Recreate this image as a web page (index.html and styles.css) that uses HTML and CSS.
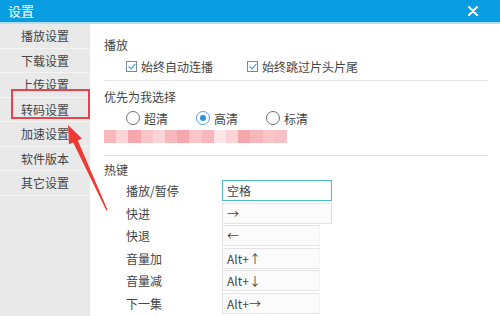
FILE: index.html
```html
<!DOCTYPE html>
<html lang="zh-CN">
<head>
    <meta charset="UTF-8">
    <title>设置</title>
    <link rel="stylesheet" href="styles.css">
</head>
<body>
    <div class="window">
        <div class="titlebar">
            <span class="title">设置</span>
            <svg class="close" width="10" height="10" viewBox="0 0 10 10">
                <path d="M1 1L9 9M9 1L1 9" stroke="#fff" stroke-width="2" stroke-linecap="round"/>
            </svg>
        </div>

        <div class="main">
            <ul class="sidebar">
                <li>播放设置</li>
                <li>下载设置</li>
                <li>上传设置</li>
                <li class="active">转码设置</li>
                <li>加速设置</li>
                <li>软件版本</li>
                <li>其它设置</li>
            </ul>

            <div class="content">
                <div class="section play">
                    <div class="section-title">播放</div>
                    <div class="options">
                        <label class="opt"><span class="checkbox checked"></span>始终自动连播</label>
                        <label class="opt"><span class="checkbox checked"></span>始终跳过片头片尾</label>
                    </div>
                </div>

                <div class="section quality">
                    <div class="section-title">优先为我选择</div>
                    <div class="options">
                        <label class="opt q1"><span class="radio"></span>超清</label>
                        <label class="opt q2"><span class="radio checked"></span>高清</label>
                        <label class="opt"><span class="radio"></span>标清</label>
                    </div>
                    <div class="blur">
                        <span class="b1"></span><span class="b2"></span><span class="b3"></span><span class="b4"></span>
                        <span class="b2"></span><span class="b1"></span><span class="b3"></span><span class="b4"></span>
                        <span class="b1"></span><span class="b5"></span><span class="b2"></span><span class="b3"></span>
                        <span class="b1"></span><span class="b4"></span><span class="b6"></span>
                    </div>
                </div>

                <div class="section hotkeys">
                    <div class="section-title">热键</div>
                    <div class="keys">
                        <div class="key-row"><span class="key-name">播放/暂停</span><span class="key-input focus">空格</span></div>
                        <div class="key-row"><span class="key-name">快进</span><span class="key-input wide">→</span></div>
                        <div class="key-row"><span class="key-name">快退</span><span class="key-input">←</span></div>
                        <div class="key-row"><span class="key-name">音量加</span><span class="key-input">Alt+↑</span></div>
                        <div class="key-row"><span class="key-name">音量减</span><span class="key-input">Alt+↓</span></div>
                        <div class="key-row"><span class="key-name">下一集</span><span class="key-input">Alt+→</span></div>
                    </div>
                </div>
            </div>
        </div>

        <!-- пометки поверх скриншота -->
        <div class="mark-box"></div>
        <svg class="mark-arrow" width="500" height="316" viewBox="0 0 500 316">
            <polygon points="68,125 82,138.5 77.8,140.4 107.6,210 106.4,210.4 73.2,142.4 69,144.3" fill="#ee3a32"/>
        </svg>
    </div>
</body>
</html>
```

FILE: styles.css
```css
* {
    box-sizing: border-box;
}

body {
    margin: 0;
    font-family: "Noto Sans CJK SC", "Noto Sans", sans-serif;
    font-size: 12px;
    color: #444;
    background: #fff;
}

.window {
    position: relative;
    width: 500px;
    height: 316px;
    overflow: hidden;
}

.titlebar {
    height: 24px;
    background: #079de0;
    border-bottom: 2px solid #aee0f6;
    display: flex;
    align-items: center;
    justify-content: space-between;
    padding: 0 22px 0 8px;
    color: #fff;
}

.title {
    font-size: 13px;
    line-height: 22px;
}

.main {
    display: flex;
    height: 292px;
}

.sidebar {
    list-style: none;
    margin: 0;
    padding: 0;
    width: 90px;
    background: #e9e9e9;
}

.sidebar li {
    height: 24.5px;
    line-height: 24px;
    text-align: center;
    border-bottom: 1px solid #f4f4f4;
}

.content {
    flex: 1;
    padding-left: 14px;
    padding-right: 12px;
}

.section {
    border-bottom: 1px solid #e4e4e4;
}

.section-title {
    height: 16px;
    line-height: 16px;
}

.play {
    padding-top: 13px;
    padding-bottom: 3px;
}

.quality {
    padding-top: 8px;
    padding-bottom: 12px;
}

.hotkeys {
    border-bottom: none;
    padding-top: 6px;
}

.options {
    display: flex;
    height: 22px;
    margin-top: 2px;
    padding-left: 22px;
    align-items: center;
}

.opt {
    display: flex;
    align-items: center;
    white-space: nowrap;
}

.play .opt:first-child {
    width: 121px;
}

.q1 {
    width: 70px;
}

.q2 {
    width: 70px;
}

.checkbox {
    width: 11px;
    height: 11px;
    border: 1px solid #7d8a96;
    margin-right: 4px;
    position: relative;
    background: #fff;
}

.checkbox.checked::after {
    content: "";
    position: absolute;
    left: 3px;
    top: 0px;
    width: 3px;
    height: 6px;
    border-right: 1.5px solid #2f8ee0;
    border-bottom: 1.5px solid #2f8ee0;
    transform: rotate(40deg);
}

.radio {
    width: 14px;
    height: 14px;
    border: 1px solid #6f6f6f;
    border-radius: 50%;
    margin-right: 4px;
    position: relative;
    background: #fff;
}

.radio.checked {
    border-color: #5a9fd8;
}

.radio.checked::after {
    content: "";
    position: absolute;
    left: 3px;
    top: 3px;
    width: 6px;
    height: 6px;
    border-radius: 50%;
    background: #2f8ee0;
}

.blur {
    display: flex;
    width: 183px;
    height: 13px;
    margin-top: 1px;
}

.blur span {
    flex: 1;
}

.b1 { background: #f7b7bb; }
.b2 { background: #fbd4d6; }
.b3 { background: #f4a8ad; }
.b4 { background: #f9c5c8; }
.b5 { background: #fde6e7; }
.b6 { background: #f7c0c4; }

.keys {
    display: flex;
    flex-direction: column;
    gap: 1.6px;
    margin-top: 2px;
}

.key-row {
    display: flex;
    align-items: center;
    height: 21px;
}

.key-name {
    width: 118px;
    padding-left: 22px;
}

.key-input {
    width: 98px;
    height: 21px;
    line-height: 19px;
    padding-left: 4px;
    border: 1px solid #e3e3e3;
    border-right-color: #f3f3f3;
    background: #fbfbfb;
}

.key-input.focus {
    width: 110px;
    border: 1px solid #4cbec6;
    background: #fff;
}

.key-input.wide {
    width: 110px;
    border-right-color: #dcdcdc;
}

.mark-box {
    position: absolute;
    left: 11px;
    top: 89px;
    width: 79px;
    height: 30px;
    border: 2px solid #e8434a;
}

.mark-arrow {
    position: absolute;
    left: 0;
    top: 0;
    pointer-events: none;
}
```
